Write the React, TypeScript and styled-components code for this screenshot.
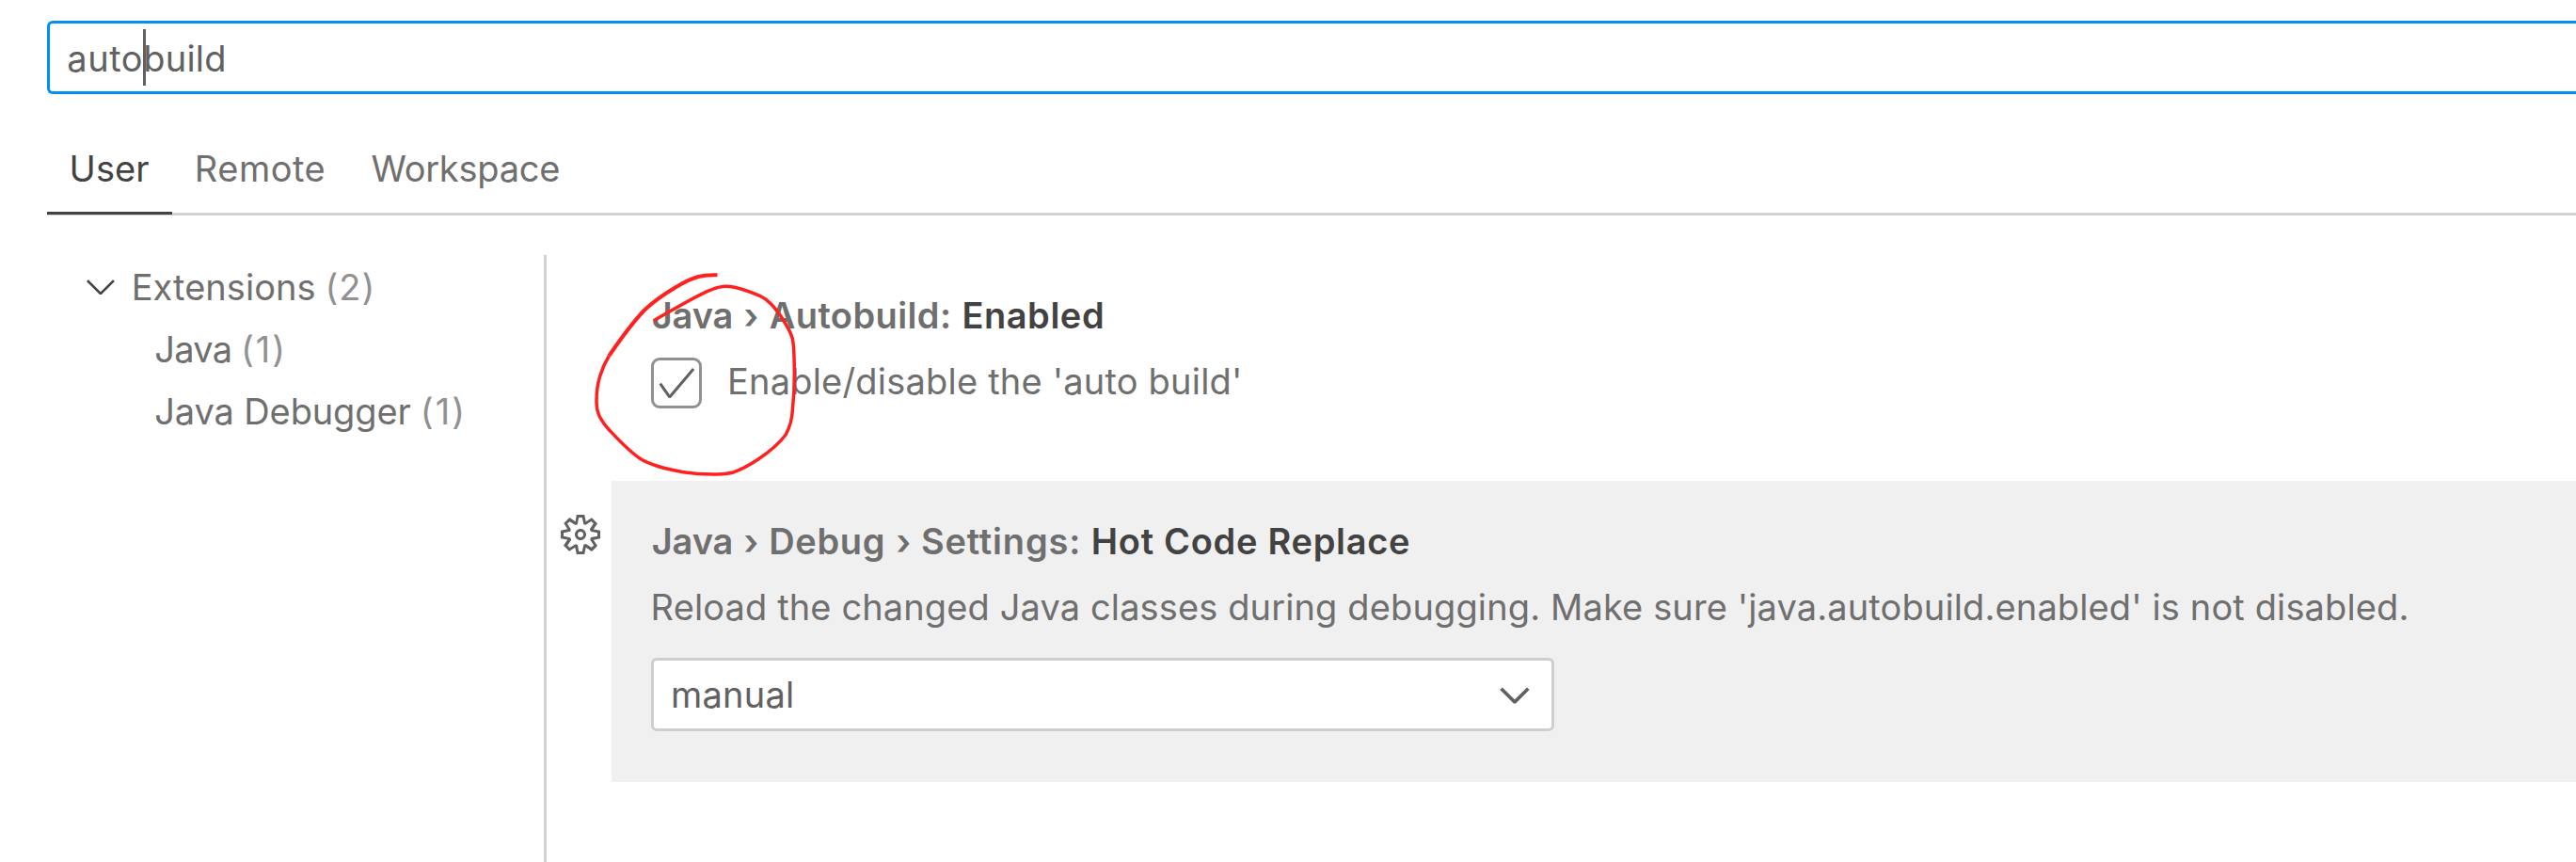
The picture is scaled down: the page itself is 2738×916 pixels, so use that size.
import React from "react";
import styled, { createGlobalStyle } from "styled-components";

const GlobalStyle = createGlobalStyle`
  html, body { margin: 0; background: #ffffff; }
  body { overflow: hidden; }
`;

const Editor = styled.main`
  position: relative;
  box-sizing: border-box;
  width: 2738px;
  height: 916px;
  padding: 22px 0 0 50px;
  overflow: hidden;
  display: flex;
  flex-direction: column;
  background: #ffffff;
  color: #6f6f6f;
  font: 400 38px/50px Inter, "Liberation Sans", sans-serif;
  white-space: pre;
`;

const Run = styled.span<{ $track?: number; $gap?: number; $color?: string }>`
  letter-spacing: ${(p) => p.$track ?? 0}px;
  margin-left: ${(p) => p.$gap ?? 0}px;
  color: ${(p) => p.$color ?? "inherit"};
`;

const SearchBox = styled.div`
  flex: none;
  display: flex;
  box-sizing: border-box;
  width: 2720px;
  height: 78px;
  padding: 2px 0 0 18.2px;
  border: 3px solid #0090f1;
  border-right: 0;
  border-radius: 6px 0 0 6px;
  color: #616161;
  line-height: 70px;
`;

const Caret = styled.span`
  width: 3px;
  height: 60px;
  margin: 4px -3px 0 0;
  background: #616161;
`;

const Tabs = styled.nav`
  flex: none;
  display: flex;
  height: 87px;
  margin-top: 39px;
  border-bottom: 3px solid #d2d2d2;
  line-height: 80px;
`;

const Tab = styled.div<{ $active?: boolean }>`
  position: relative;
  padding: 0 24.6px 0 23.6px;
  color: ${(p) => (p.$active ? "#424242" : "#6f6f6f")};
  &::after {
    content: "";
    display: ${(p) => (p.$active ? "block" : "none")};
    position: absolute;
    left: 0;
    right: 0;
    bottom: -2px;
    height: 3px;
    background: #424242;
  }
`;

const Body = styled.div`
  flex: 1;
  display: flex;
  margin-top: 42px;
`;

const Tree = styled.div`
  box-sizing: border-box;
  width: 531px;
  padding-top: 1px;
  border-right: 3px solid #d2d2d2;
  line-height: 66px;
`;

const TreeRow = styled.div<{ $indent: number }>`
  display: flex;
  height: 66px;
  padding-left: ${(p) => p.$indent}px;
`;

const Glyph = styled.svg`
  flex: none;
  width: 48px;
  height: 48px;
  fill: currentColor;
`;

const TreeChevron = styled(Glyph)`
  margin: 8px 9.2px 0 0;
  color: #424242;
`;

const SettingsList = styled.div`
  flex: 1;
  display: flex;
  flex-direction: column;
`;

const SettingRow = styled.div<{ $height: number }>`
  display: flex;
  height: ${(p) => p.$height}px;
`;

const Gutter = styled.div`
  box-sizing: border-box;
  flex: none;
  width: 69px;
  padding: 33px 0 0 12px;
  color: #616161;
`;

const Setting = styled.section<{ $focused?: boolean }>`
  flex: 1;
  padding: 39px 0 0 42px;
  background: ${(p) => (p.$focused ? "#f0f0f0" : "transparent")};
`;

const Title = styled.h3`
  display: flex;
  margin: 0 0 20px 0.7px;
  font-size: inherit;
  font-weight: 600;
`;

const Description = styled.div`
  margin: 0 0 29px -0.4px;
  letter-spacing: 0.12px;
`;

const CheckRow = styled.div`
  display: flex;
  gap: 27px;
`;

const Checkbox = styled.div`
  box-sizing: border-box;
  width: 54px;
  height: 54px;
  border: 3px solid #919191;
  border-radius: 9px;
  color: #616161;
`;

const Select = styled.div`
  box-sizing: border-box;
  display: flex;
  justify-content: space-between;
  width: 960px;
  height: 78px;
  padding: 0 15px 0 18px;
  border: 3px solid #cecece;
  border-radius: 6px;
  background: #ffffff;
  color: #616161;
  line-height: 72px;
`;

const SelectChevron = styled(Glyph)`
  margin-top: 12px;
  stroke: currentColor;
  stroke-width: 0.35;
`;

const Scribble = styled.svg`
  position: absolute;
  left: 620px;
  top: 280px;
  width: 240px;
  height: 240px;
  fill: none;
  stroke: #ff2020;
`;

const chevron =
  "M7.976 10.072l4.357-4.357.62.618L8.284 11h-.618L3 6.333l.619-.618 4.357 4.357z";
const check =
  "M14.431 3.323l-8.47 10-.79-.036-3.35-4.77.818-.574 2.978 4.24 8.051-9.506.764.646z";
const gear =
  "M9.1 4.4L8.6 2H7.4l-.5 2.4-.7.3-2-1.3-.9.8 1.3 2-.2.7-2.4.5v1.2l2.4.5.3.8-1.3 2 .8.8 2-1.3.8.3.4 2.3h1.2l.5-2.4.8-.3 2 1.3.8-.8-1.3-2 .3-.8 2.3-.4V7.4l-2.4-.5-.3-.8 1.3-2-.8-.8-2 1.3-.7-.2zM9.4 1l.5 2.4L12 2.1l2 2-1.4 2.1 2.4.4v2.8l-2.4.5L14 12l-2 2-2.1-1.4-.5 2.4H6.6l-.5-2.4L4 13.9l-2-2 1.4-2.1L1 9.4V6.6l2.4-.5L2.1 4l2-2 2.1 1.4.4-2.4h2.8zm.6 7c0 1.1-.9 2-2 2s-2-.9-2-2 .9-2 2-2 2 .9 2 2zM8 9c.6 0 1-.4 1-1s-.4-1-1-1-1 .4-1 1 .4 1 1 1z";

export default function App() {
  return (
    <>
      <GlobalStyle />
      <Editor>
        <SearchBox>
          <Run $track={0.6}>auto</Run>
          <Caret />
          <Run $track={0.2}>build</Run>
        </SearchBox>
        <Tabs>
          <Tab $active>
            <Run $track={0.07}>User</Run>
          </Tab>
          <Tab>
            <Run $track={0.5}>Remote</Run>
          </Tab>
          <Tab>
            <Run $track={-0.25}>Workspace</Run>
          </Tab>
        </Tabs>
        <Body>
          <Tree>
            <TreeRow $indent={32.5}>
              <TreeChevron viewBox="0 0 16 16">
                <path d={chevron} />
              </TreeChevron>
              <Run $track={0.03}>Extensions</Run>
              <Run $track={1.03} $gap={9.9} $color="#919191">(2)</Run>
            </TreeRow>
            <TreeRow $indent={114.3}>
              <Run $track={-0.7}>Java</Run>
              <Run $track={2.09} $gap={9.4} $color="#919191">(1)</Run>
            </TreeRow>
            <TreeRow $indent={114.3}>
              <Run $track={-0.13}>Java Debugger</Run>
              <Run $track={2.09} $gap={10.1} $color="#919191">(1)</Run>
            </TreeRow>
          </Tree>
          <SettingsList>
            <SettingRow $height={240}>
              <Gutter />
              <Setting>
                <Title>
                  <Run $track={-0.134}>Java</Run>
                  <Run $gap={11.4}>›</Run>
                  <Run $track={0.402} $gap={11.3}>Autobuild:</Run>
                  <Run $track={0.549} $gap={10.9} $color="#424242">Enabled</Run>
                </Title>
                <CheckRow>
                  <Checkbox>
                    <Glyph viewBox="0 0 16 16">
                      <path d={check} />
                    </Glyph>
                  </Checkbox>
                  <Run $track={0.2}>Enable/disable the 'auto build'</Run>
                </CheckRow>
              </Setting>
            </SettingRow>
            <SettingRow $height={320}>
              <Gutter>
                <Glyph viewBox="0 0 16 16">
                  <path d={gear} />
                </Glyph>
              </Gutter>
              <Setting $focused>
                <Title>
                  <Run $track={-0.134}>Java</Run>
                  <Run $gap={11.4}>›</Run>
                  <Run $track={0.652} $gap={10.8}>Debug</Run>
                  <Run $gap={11.4}>›</Run>
                  <Run $track={0.842} $gap={10.6}>Settings:</Run>
                  <Run $track={0.7} $gap={10.6} $color="#424242">Hot Code Replace</Run>
                </Title>
                <Description>
                  Reload the changed Java classes during debugging. Make sure 'java.autobuild.enabled' is not disabled.
                </Description>
                <Select>
                  <Run $track={0.22}>manual</Run>
                  <SelectChevron viewBox="0 0 16 16">
                    <path d={chevron} />
                  </SelectChevron>
                </Select>
              </Setting>
            </SettingRow>
          </SettingsList>
        </Body>
        <Scribble viewBox="620 280 240 240">
          <path
            strokeWidth="4"
            d="M762.5 292.3C755 292 748 292.5 742.3 294C733 296.5 726 300.5 718.6 305C706 312.5 696 319 685 329.5C671 344 657 364 647.4 378"
          />
          <path
            strokeWidth="3.5"
            d="M647.4 378C642.5 386 640 392 637.6 400C634.5 410 634 418 634 426.7C634 433 635 438 637.6 443.3C640 448 643 452 647.4 456.7C658 468 669 480 681 487.7C693 495 711 499 726.5 501.7C738 503.5 747 504 758.2 504C767 504 774 503.5 780 501.7C789 498.5 797 494 805.6 488.3C817 480.5 828 471.5 835.3 461.7C840 453 842 444 842.4 435C844 420 844.4 410 844.4 396.7C844 382 844.5 372 842.4 360C840 351 835 344 829.3 335C822 325 817 319 807.6 314.3C796 309.5 786 305.5 776 304.5C767 303.5 761 306 752.2 309.3C733 318 714 330 694.9 340.7"
          />
        </Scribble>
      </Editor>
    </>
  );
}
